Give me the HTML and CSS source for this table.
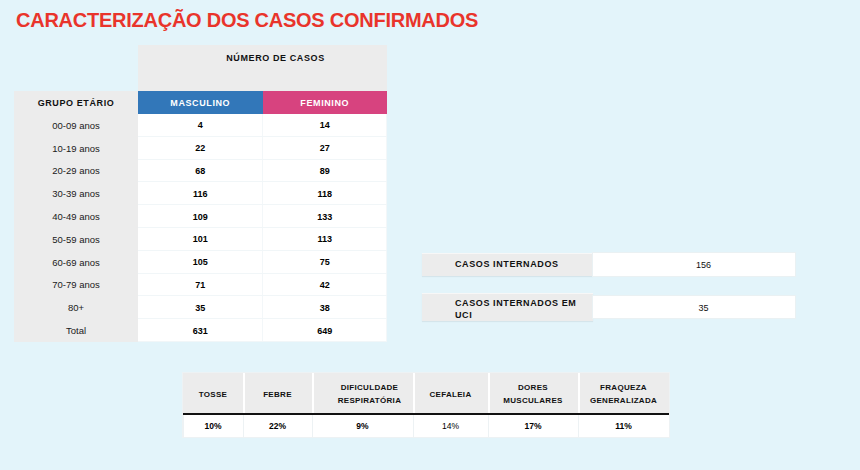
FILE: index.html
```html
<!DOCTYPE html>
<html lang="pt">
<head>
<meta charset="utf-8">
<title>Caracterização dos casos confirmados</title>
<link rel="stylesheet" href="styles.css">
</head>
<body>
<h1 class="title">CARACTERIZAÇÃO DOS CASOS CONFIRMADOS</h1>
<div class="page">
  <div class="top">
    <table class="cases">
      <thead>
        <tr class="r-top">
          <th class="blank"></th>
          <th class="num" colspan="2">NÚMERO DE CASOS</th>
        </tr>
        <tr class="r-head">
          <th class="grp">GRUPO ETÁRIO</th>
          <th class="masc">MASCULINO</th>
          <th class="fem">FEMININO</th>
        </tr>
      </thead>
      <tbody>
        <tr><td class="age">00-09 anos</td><td class="val">4</td><td class="val">14</td></tr>
        <tr><td class="age">10-19 anos</td><td class="val">22</td><td class="val">27</td></tr>
        <tr><td class="age">20-29 anos</td><td class="val">68</td><td class="val">89</td></tr>
        <tr><td class="age">30-39 anos</td><td class="val">116</td><td class="val">118</td></tr>
        <tr><td class="age">40-49 anos</td><td class="val">109</td><td class="val">133</td></tr>
        <tr><td class="age">50-59 anos</td><td class="val">101</td><td class="val">113</td></tr>
        <tr><td class="age">60-69 anos</td><td class="val">105</td><td class="val">75</td></tr>
        <tr><td class="age">70-79 anos</td><td class="val">71</td><td class="val">42</td></tr>
        <tr><td class="age">80+</td><td class="val">35</td><td class="val">38</td></tr>
        <tr><td class="age">Total</td><td class="val">631</td><td class="val">649</td></tr>
      </tbody>
    </table>
    <div class="side">
      <div class="kpi">
        <div class="kpi-label">CASOS INTERNADOS</div>
        <div class="kpi-value">156</div>
      </div>
      <div class="kpi kpi-uci">
        <div class="kpi-label">CASOS INTERNADOS EM UCI</div>
        <div class="kpi-value">35</div>
      </div>
    </div>
  </div>
  <table class="symptoms">
    <thead>
      <tr>
        <th class="c1">TOSSE</th>
        <th class="c2">FEBRE</th>
        <th class="c3"><span class="shift">DIFICULDADE<br>RESPIRATÓRIA</span></th>
        <th class="c4">CEFALEIA</th>
        <th class="c5">DORES<br>MUSCULARES</th>
        <th class="c6">FRAQUEZA<br>GENERALIZADA</th>
      </tr>
    </thead>
    <tbody>
      <tr>
        <td>10%</td>
        <td>22%</td>
        <td>9%</td>
        <td class="light">14%</td>
        <td>17%</td>
        <td>11%</td>
      </tr>
    </tbody>
  </table>
</div>
</body>
</html>
```
FILE: styles.css
```css
html, body {
  margin: 0;
  padding: 0;
}

body {
  background: #e3f4fa;
  font-family: "Liberation Sans", Arial, sans-serif;
  color: #111;
  width: 860px;
  height: 470px;
  overflow: hidden;
}

.title {
  margin: 0;
  padding: 9px 0 0 16px;
  font-size: 20px;
  line-height: 23px;
  font-weight: 700;
  letter-spacing: -0.25px;
  color: #e9342b;
}

.page {
  padding-left: 14px;
  margin-top: 13px;
}

.top {
  display: flex;
  align-items: flex-start;
}

/* main cases table */
.cases {
  border-collapse: collapse;
  border-spacing: 0;
  table-layout: fixed;
  width: 373px;
}

.cases th,
.cases td {
  padding: 0;
  text-align: center;
  vertical-align: middle;
}

.cases .r-top th {
  height: 46px;
}

.cases .blank {
  width: 124px;
  background: transparent;
}

.cases .r-top .num {
  height: 38px;
  background: #ececec;
  vertical-align: top;
  padding: 8px 0 0 26px;
  font-size: 9px;
  line-height: 11px;
  font-weight: 700;
  letter-spacing: 0.6px;
  color: #111;
}

.cases .r-head th {
  height: 23px;
  font-size: 9px;
  font-weight: 700;
  letter-spacing: 0.6px;
}

.cases .grp {
  background: #ececec;
  color: #111;
}

.cases .masc {
  width: 124px;
  background: #3277b9;
  color: #fff;
}

.cases .fem {
  background: #d7437f;
  color: #fff;
}

.cases tbody tr {
  height: 22.8px;
}

.cases .age {
  background: #ececec;
  font-size: 9.5px;
  color: #1a1a1a;
}

.cases .val {
  background: #fff;
  font-size: 9px;
  font-weight: 700;
  color: #000;
  box-shadow: inset 0 -1px 0 #f1f6f8, inset -1px 0 0 #f3f7f9;
}

/* side KPI boxes */
.side {
  margin-left: 35px;
  padding-top: 208px;
  display: flex;
  flex-direction: column;
  gap: 17px;
}

.kpi {
  display: flex;
  align-items: center;
}

.kpi-label {
  width: 171px;
  height: 23px;
  box-sizing: border-box;
  background: #ececec;
  padding: 0 10px 0 33px;
  display: flex;
  align-items: center;
  font-size: 9px;
  font-weight: 700;
  letter-spacing: 0.6px;
  line-height: 11.5px;
  color: #111;
  box-shadow: 0 1px 1px rgba(0, 0, 0, 0.06);
  border-top: 1px solid #f7f7f7;
}

.kpi-value {
  width: 202px;
  height: 23px;
  box-sizing: border-box;
  background: #fff;
  padding-left: 19px;
  display: flex;
  align-items: center;
  justify-content: center;
  font-size: 9px;
  color: #111;
  box-shadow: 0 0 0 1px #eaf1f3;
}

.kpi-uci .kpi-label {
  height: 28px;
  padding-top: 4px;
}

.kpi-uci .kpi-value {
  height: 22px;
  padding-top: 2px;
}

/* symptoms table */
.symptoms {
  margin-top: 31px;
  margin-left: 169px;
  border-collapse: collapse;
  border-spacing: 0;
  table-layout: fixed;
  width: 486px;
  box-shadow: 0 0 0 1px #edf2f4;
}

.symptoms th {
  height: 38.5px;
  padding: 2px 0 0;
  background: #ececec;
  font-size: 8px;
  font-weight: 700;
  letter-spacing: 0.3px;
  line-height: 13.3px;
  color: #111;
  text-align: center;
  vertical-align: middle;
  border-bottom: 2px solid #111;
  box-shadow: inset 2px 0 0 #fff;
}

.symptoms th.c1 {
  box-shadow: none;
}

.c1 { width: 60px; }
.c2 { width: 69px; }
.c3 { width: 101px; }
.c4 { width: 75px; }
.c5 { width: 90px; }
.c6 { width: 91px; }

.shift {
  display: inline-block;
  padding-left: 14px;
}

.symptoms td {
  height: 21.5px;
  padding: 0;
  background: #fff;
  font-size: 8.5px;
  font-weight: 700;
  color: #000;
  text-align: center;
  vertical-align: middle;
  box-shadow: inset 1px 0 0 #edf2f4;
}

.symptoms td.light {
  font-weight: 400;
}
```
